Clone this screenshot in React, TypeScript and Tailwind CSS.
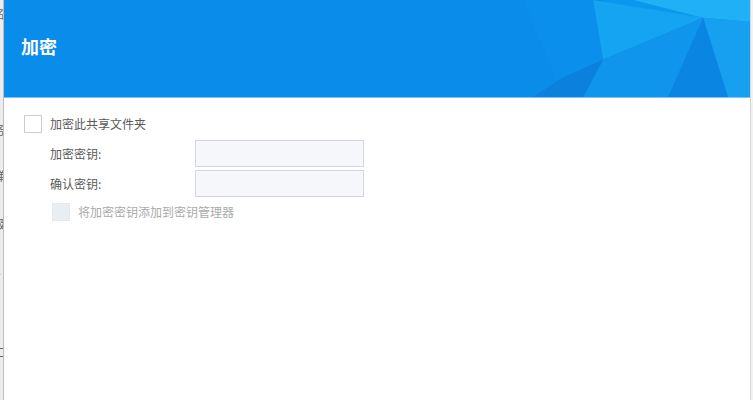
// Диалог «加密» поверх окна общего ресурса: шапка с гранями + форма ключа.
const FONT = "font-['Microsoft_YaHei','Noto_Sans_CJK_SC',sans-serif]";

// Обрезки текста фонового окна, торчащие слева
const BG_GLYPHS = [
  { top: "top-[8px]", ch: "名" },
  { top: "top-[124px]", ch: "务" },
  { top: "top-[170px]", ch: "蝉" },
  { top: "top-[218px]", ch: "级" },
  { top: "top-[264px]", ch: "A" },
  { top: "top-[346px]", ch: "二" },
];

function HeaderFacets() {
  return (
    <svg
      className="absolute inset-0 h-full w-full"
      viewBox="0 0 747 98"
      preserveAspectRatio="none"
    >
      <rect width="747" height="98" fill="#0a8cea" />
      <polygon points="520,0 600,0 640,98 560,98" fill="#0b8fec" />
      <polygon points="600,0 747,0 747,98 640,98" fill="#0c97ee" />
      <polygon points="630,0 747,0 747,22 700,18" fill="#1fb0f5" />
      <polygon points="590,0 700,18 600,60" fill="#14a4f1" />
      <polygon points="700,18 747,22 747,98 725,98" fill="#16a0ef" />
      <polygon points="600,60 700,18 665,98 580,98" fill="#0f95eb" />
      <polygon points="700,18 725,98 665,98" fill="#0a86e2" />
      <polygon points="560,78 600,60 580,98 530,98" fill="#0b80dd" />
    </svg>
  );
}

function Checkbox({ disabled = false }: { disabled?: boolean }) {
  return (
    <span
      className={`block h-[18px] w-[18px] border ${
        disabled ? "border-[#e2e8ee] bg-[#e9eef3]" : "border-[#c9cdd2] bg-white"
      }`}
    />
  );
}

function KeyRow({ label }: { label: string }) {
  return (
    <div className="flex items-center">
      <span className="w-[191px] pl-[46px] text-[12px] text-[#5a5a5a]">{label}</span>
      <input
        type="password"
        className="h-[27px] w-[169px] border border-[#d3d7db] bg-[#f5f7fa] outline-none"
      />
    </div>
  );
}

export default function App() {
  return (
    <div className={`${FONT} flex h-[400px] w-[753px] overflow-hidden bg-white`}>
      {/* кромка фонового окна */}
      <div className="relative w-[4px] shrink-0 overflow-hidden border-r border-[#bdbdbd] bg-[#ececec]">
        {BG_GLYPHS.map((g) => (
          <span
            key={g.top}
            className={`absolute ${g.top} left-[-7px] text-[12px] leading-none text-[#666]`}
          >
            {g.ch}
          </span>
        ))}
      </div>

      <div className="flex flex-1 flex-col">
        <div className="relative h-[98px] shrink-0 border-b border-[#7cc4f6]">
          <HeaderFacets />
          <h1 className="relative pl-[17px] pt-[34px] text-[18px] font-bold leading-[24px] text-white">
            加密
          </h1>
        </div>

        <div className="flex flex-col pt-[17px]">
          <label className="flex items-center gap-[8px] pl-[20px]">
            <Checkbox />
            <span className="text-[12px] text-[#5a5a5a]">加密此共享文件夹</span>
          </label>

          <div className="mt-[7px] flex flex-col gap-[3px]">
            <KeyRow label="加密密钥:" />
            <KeyRow label="确认密钥:" />
          </div>

          <label className="mt-[6px] flex items-center gap-[8px] pl-[48px]">
            <Checkbox disabled />
            <span className="text-[12px] text-[#aaa]">将加密密钥添加到密钥管理器</span>
          </label>
        </div>
      </div>

      {/* правая кромка */}
      <div className="w-[3px] shrink-0 border-l border-[#d6d6d6] bg-[#f2f2f2]" />
    </div>
  );
}
